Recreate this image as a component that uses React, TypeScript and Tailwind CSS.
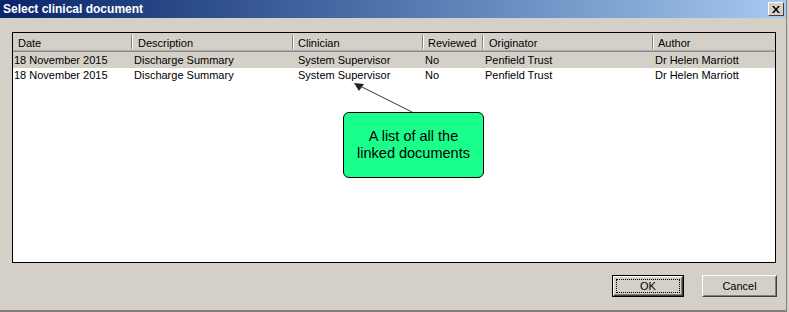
import React from 'react'

const columns = [
  { title: 'Date', width: 'w-[118px]', head: 'pl-[5px]', cell: 'pl-[1px]' },
  { title: 'Description', width: 'w-[161px]', head: 'pl-[5px]', cell: 'pl-[1px]' },
  { title: 'Clinician', width: 'w-[130px]', head: 'pl-[4px]', cell: 'pl-[4px]' },
  { title: 'Reviewed', width: 'w-[60px]', head: 'pl-[4px]', cell: 'pl-[1px]' },
  { title: 'Originator', width: 'w-[170px]', head: 'pl-[5px]', cell: 'pl-[1px]' },
  { title: 'Author', width: 'flex-1', head: 'pl-[4px]', cell: 'pl-[1px]' },
]

const rows = [
  ['18 November 2015', 'Discharge Summary', 'System Supervisor', 'No', 'Penfield Trust', 'Dr Helen Marriott'],
  ['18 November 2015', 'Discharge Summary', 'System Supervisor', 'No', 'Penfield Trust', 'Dr Helen Marriott'],
]

function Button({ label, primary }: { label: string; primary?: boolean }) {
  if (primary) {
    return (
      <div className="w-[72px] h-[22px] border border-black">
        <div className="h-full border border-t-white border-l-white border-r-[#404040] border-b-[#404040] bg-[#d4d0c8]">
          <div className="h-full border border-t-[#d4d0c8] border-l-[#d4d0c8] border-r-[#808080] border-b-[#808080] p-[1px]">
            <div className="h-full border border-dotted border-black flex items-center justify-center">
              {label}
            </div>
          </div>
        </div>
      </div>
    )
  }
  return (
    <div className="w-[75px] h-[22px] border border-t-white border-l-white border-r-[#404040] border-b-[#404040] bg-[#d4d0c8]">
      <div className="h-full border border-t-[#d4d0c8] border-l-[#d4d0c8] border-r-[#808080] border-b-[#808080] flex items-center justify-center">
        {label}
      </div>
    </div>
  )
}

export default function App() {
  return (
    <div
      className="relative w-[789px] h-[312px] bg-[#d4d0c8] text-[11px] text-black overflow-hidden"
      style={{ fontFamily: '"Liberation Sans", Arial, sans-serif' }}
    >
      <div className="w-[787px] h-[312px] flex flex-col border-r border-[#808080]">
        {/* Title bar */}
        <div className="h-[18px] flex items-center justify-between bg-gradient-to-r from-[#0a246a] to-[#a6caf0] pl-[3px] pr-[2px]">
          <span className="text-white font-bold text-[12px] leading-none">Select clinical document</span>
          <div className="w-[16px] h-[14px] bg-[#d4d0c8] border border-t-white border-l-white border-r-[#404040] border-b-[#404040] flex items-center justify-center">
            <svg width="8" height="7" viewBox="0 0 8 7">
              <path d="M0 0h2l2 2.5L6 0h2L5 3.5 8 7H6L4 4.5 2 7H0l3-3.5z" fill="black" />
            </svg>
          </div>
        </div>

        <div className="flex-1 flex flex-col pl-[12px] pt-[14px]">
          {/* List view */}
          <div className="w-[764px] h-[231px] border border-black bg-white flex flex-col">
            <div className="h-[17px] flex bg-[#d4d0c8]">
              {columns.map((c, i) => (
                <div key={c.title} className={`${c.width} flex items-center`}>
                  {i > 0 && (
                    <div className="flex h-[14px]">
                      <div className="w-px bg-[#808080]" />
                      <div className="w-px bg-white" />
                    </div>
                  )}
                  <span className={`${c.head} mt-[3px]`}>{c.title}</span>
                </div>
              ))}
            </div>
            <div className="h-px bg-[#a9a9a9]" />
            <div className="h-px bg-[#8c8c8c]" />
            {rows.map((r, ri) => (
              <div
                key={ri}
                className={`flex ${ri === 0 ? 'h-[16px] bg-[#d4d0c8] items-end' : 'h-[14px] bg-white items-center'}`}
              >
                {r.map((v, ci) => (
                  <div key={ci} className={`${columns[ci].width} ${ci > 0 ? 'pl-[2px]' : ''}`}>
                    <span className={columns[ci].cell}>{v}</span>
                  </div>
                ))}
              </div>
            ))}
          </div>

          {/* Buttons */}
          <div className="w-[765px] flex justify-end gap-[18px] mt-[12px]">
            <Button label="OK" primary />
            <Button label="Cancel" />
          </div>
        </div>
      </div>
      <div className="absolute left-0 bottom-0 w-[787px] h-[2px] bg-[#808080]" />

      {/* Annotation */}
      <svg className="absolute left-0 top-0" width="789" height="312">
        <line x1="412" y1="112" x2="362" y2="87" stroke="#333" strokeWidth="1" />
        <polygon points="354,83 364,84 359,91" fill="#222" />
      </svg>
      <div className="absolute left-[343px] top-[112px] w-[141px] h-[66px] rounded-[6px] border border-black bg-[#1aff8c] flex items-center justify-center text-center text-[14.5px] leading-[17px]">
        A list of all the
        <br />
        linked documents
      </div>
    </div>
  )
}
